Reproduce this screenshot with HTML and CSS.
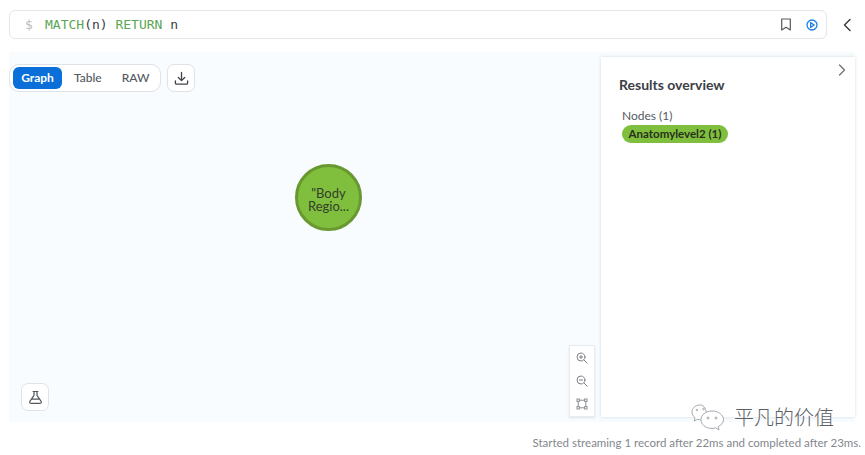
FILE: index.html
```html
<!DOCTYPE html>
<html lang="en">
<head>
<meta charset="utf-8">
<title>Query result</title>
<link rel="stylesheet" href="styles.css">
</head>
<body>
<header class="top">
  <div class="editor">
    <span class="prompt">$</span>
    <code class="code"><span class="kw">MATCH</span>(n) <span class="kw">RETURN</span> n</code>
    <span class="editor-icons">
      <svg class="ic-book" width="12" height="13" viewBox="0 0 12 13" fill="none" stroke="#55595f" stroke-width="1.2" stroke-linejoin="round"><path d="M1.700 1h8.600v11L6 9.300 1.700 12z"/></svg>
      <svg class="ic-run" width="12" height="12" viewBox="0 0 12 12" fill="none" stroke="#1a82e2" stroke-width="1.3" stroke-linejoin="round"><circle cx="6" cy="6" r="5"/><path d="M4.600 3.600 8.200 6 4.600 8.400z"/></svg>
    </span>
  </div>
  <svg class="collapse" width="12" height="16" viewBox="0 0 12 16" fill="none" stroke="#3c4046" stroke-width="1.5" stroke-linecap="round" stroke-linejoin="round"><path d="M9 2.500 3.500 8 9 13.500"/></svg>
</header>

<main class="stage">
  <div class="canvas">
    <div class="view-bar">
      <div class="tabs">
        <span class="tab active">Graph</span>
        <span class="tab">Table</span>
        <span class="tab">RAW</span>
      </div>
      <button class="icon-btn" type="button" aria-label="Download">
        <svg width="15" height="15" viewBox="0 0 16 16" fill="none" stroke="#3f4349" stroke-width="1.4" stroke-linecap="round" stroke-linejoin="round"><path d="M8 1.500v8.600M4.600 6.900 8 10.300l3.400-3.400M1.500 10.500v2.200q0 1.300 1.300 1.300h10.400q1.300 0 1.300-1.300v-2.200"/></svg>
      </button>
    </div>

    <div class="node"><span class="node-label">"Body<br>Regio...</span></div>

    <button class="icon-btn flask" type="button" aria-label="Experiment">
      <svg width="15" height="15" viewBox="0 0 16 16" fill="none" stroke="#53575d" stroke-width="1.3" stroke-linecap="round" stroke-linejoin="round"><path d="M5.400 1.600h5.200M6.400 1.600v4.200L2 12.200q-.9 1.900 1.200 2h9.600q2.100-.1 1.200-2L9.600 5.800V1.600M4.200 9.800h7.600"/></svg>
    </button>

    <div class="zoom-bar">
      <svg width="12" height="12" viewBox="0 0 12 12" fill="none" stroke="#7d8187" stroke-width="1" stroke-linecap="round"><circle cx="5" cy="5" r="4"/><path d="m8 8 3.200 3.200M3.400 5h3.200M5 3.400v3.200"/></svg>
      <svg width="12" height="12" viewBox="0 0 12 12" fill="none" stroke="#7d8187" stroke-width="1" stroke-linecap="round"><circle cx="5" cy="5" r="4"/><path d="m8 8 3.200 3.200M3.400 5h3.200"/></svg>
      <svg width="12" height="12" viewBox="0 0 12 12" fill="none" stroke="#8b8f95" stroke-width="1"><rect x="2.200" y="2.200" width="7.600" height="7.600"/><rect x="1" y="1" width="2.400" height="2.400" fill="#fff"/><rect x="8.600" y="1" width="2.400" height="2.400" fill="#fff"/><rect x="1" y="8.600" width="2.400" height="2.400" fill="#fff"/><rect x="8.600" y="8.600" width="2.400" height="2.400" fill="#fff"/></svg>
    </div>
  </div>

  <aside class="panel">
    <svg class="panel-close" width="10" height="14" viewBox="0 0 10 14" fill="none" stroke="#6a6e74" stroke-width="1.2" stroke-linecap="round" stroke-linejoin="round"><path d="M2.500 2 7.500 7l-5 5"/></svg>
    <h2 class="panel-title">Results overview</h2>
    <div class="panel-sub">Nodes (1)</div>
    <span class="pill">Anatomylevel2 (1)</span>
  </aside>
</main>

<footer class="status">Started streaming 1 record after 22ms and completed after 23ms.</footer>

<div class="watermark">
  <svg width="36" height="28" viewBox="0 0 36 28" fill="none" stroke="#a4a9ae" stroke-width="1"><path d="M16 12C15 5 13.500 1 9 1 4 1 1 4.500 1 8c0 2.600 1.300 4.400 3 5.700L3.300 17l3.400-1.700c1 .3 2 .4 3 .4" fill="#fff"/><path d="M21 7c-6.500 0-11 3.900-11 8.700s4.500 8.700 11 8.700c1.300 0 2.400-.2 3.500-.5l3.500 2-.8-3.200c2.900-1.600 5.300-4 5.300-7C32.500 10.900 27.500 7 21 7z" fill="#fff"/><circle cx="17" cy="14" r="1"/><circle cx="25" cy="14" r="1"/><circle cx="6" cy="6" r=".8"/><circle cx="12.500" cy="5" r=".8"/></svg>
  <span class="wm-text">平凡的价值</span>
</div>
</body>
</html>
```
FILE: styles.css
```css
* { box-sizing: border-box; }
html, body { margin: 0; padding: 0; }
body {
  width: 865px;
  height: 455px;
  position: relative;
  overflow: hidden;
  background: #fff;
  font-family: Lato, "Open Sans", sans-serif;
  color: #3c4046;
  padding: 10px 0 0 9px;
}
.top { display: flex; align-items: center; height: 29px; }
.editor {
  width: 818px;
  height: 29px;
  border: 1px solid #e3e5e8;
  border-radius: 6px;
  display: flex;
  align-items: center;
  padding: 0 8px 0 15px;
  background: #fff;
}
.prompt { font: 13px "DejaVu Sans Mono", monospace; color: #b9bdc2; width: 20px; }
.code { font: 13px "DejaVu Sans Mono", monospace; color: #3c4046; white-space: pre; }
.kw { color: #5aa653; }
.editor-icons { margin-left: auto; display: flex; align-items: center; gap: 14px; }
.collapse { margin-left: 14px; }
.stage {
  margin-top: 13px;
  width: 846px;
  height: 370px;
  background: #f8fcff;
  display: flex;
  justify-content: flex-end;
  align-items: center;
}
.canvas { position: relative; flex: 1; align-self: stretch; }
.view-bar { display: flex; gap: 6px; padding: 12px 0 0 0; }
.tabs {
  height: 28px;
  background: #fff;
  border: 1px solid #dfe2e6;
  border-radius: 10px;
  display: flex;
  align-items: center;
  padding: 0 3px;
  width: 152px;
  font-size: 12px;
  font-weight: 500;
  color: #55595f;
}
.tab { flex: none; height: 22px; line-height: 21px; padding: 0 9px 0 10px; border-radius: 6px; }
.tab + .tab { margin-left: 2px; }
.tab + .tab + .tab { margin-left: 1px; }
.tab.active { background: #0a6fd8; color: #fff; font-weight: 700; width: 49px; text-align: center; padding: 0; }
.icon-btn {
  width: 28px;
  height: 28px;
  padding: 0;
  background: #fff;
  border: 1px solid #dfe2e6;
  border-radius: 7px;
  display: flex;
  align-items: center;
  justify-content: center;
}
.node {
  position: absolute;
  left: 286px;
  top: 112px;
  width: 67px;
  height: 67px;
  border-radius: 50%;
  background: #80bf3e;
  border: 3px solid #68982f;
  display: flex;
  align-items: center;
  justify-content: center;
  text-align: center;
  font-size: 13px;
  line-height: 13px;
  color: #33402a;
}
.node-label { display: block; padding-top: 5px; }
.flask { position: absolute; left: 12px; top: 331px; }
.zoom-bar {
  position: absolute;
  left: 560px;
  top: 293px;
  width: 26px;
  height: 72px;
  background: #fff;
  border: 1px solid #e9ecef;
  box-shadow: 0 1px 2px rgba(120, 130, 140, .2);
  display: flex;
  flex-direction: column;
  align-items: center;
  justify-content: space-between;
  padding: 6px 0;
}
.panel {
  position: relative;
  width: 254px;
  height: 360px;
  background: #fff;
  box-shadow: 0 0 3px rgba(120, 140, 160, .3);
  padding: 19px 18px;
}
.panel-close { position: absolute; right: 8px; top: 6px; }
.panel-title { margin: 0; font-size: 14px; line-height: 18px; font-weight: 700; color: #3c4046; }
.panel-sub { margin: 14px 0 0 3px; font-size: 12px; line-height: 16px; color: #55595f; }
.pill {
  display: block;
  width: 106px;
  margin: 1px 0 0 3px;
  height: 18px;
  line-height: 18px;
  text-align: center;
  white-space: nowrap;
  border-radius: 9px;
  background: #80bf3e;
  color: #26301c;
  font-size: 11.500px;
  font-weight: 700;
}
.status {
  margin-top: 13px;
  width: 852px;
  text-align: right;
  font-size: 11.500px;
  line-height: 15px;
  color: #83878d;
  white-space: nowrap;
}
.watermark {
  position: absolute;
  left: 691px;
  top: 404px;
  display: flex;
  align-items: center;
}
.wm-text {
  font-family: "Noto Sans CJK SC", sans-serif;
  font-size: 20px;
  font-weight: 300;
  color: #5d6165;
  margin-left: 7px;
  margin-bottom: 2px;
  text-shadow: 0 0 2px #fff, 0 0 2px #fff;
  line-height: 24px;
}
```
